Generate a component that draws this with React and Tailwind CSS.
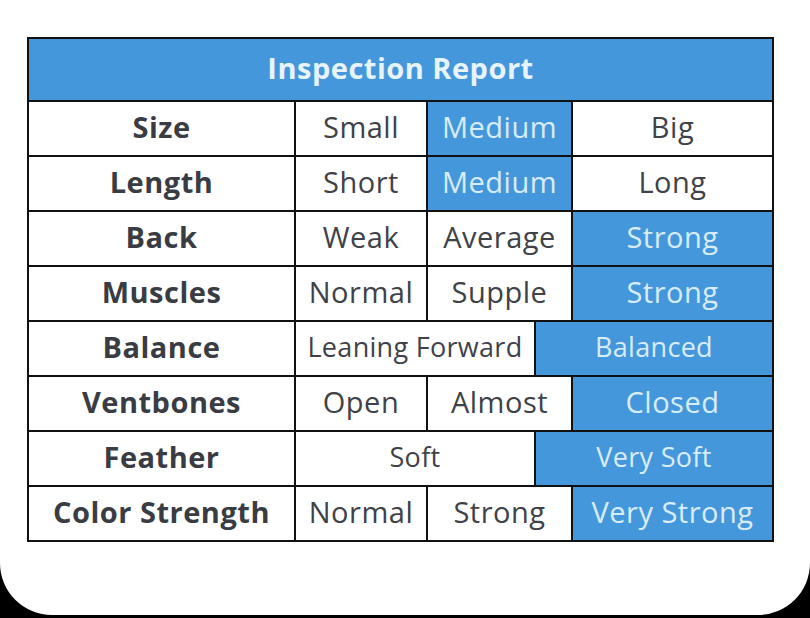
import React from "react";

const rows = [
  { label: "Size", cells: [["Small"], ["Medium", true], ["Big"]] },
  { label: "Length", cells: [["Short"], ["Medium", true], ["Long"]] },
  { label: "Back", cells: [["Weak"], ["Average"], ["Strong", true]] },
  { label: "Muscles", cells: [["Normal"], ["Supple"], ["Strong", true]] },
  { label: "Balance", split: [["Leaning Forward"], ["Balanced", true]] },
  { label: "Ventbones", cells: [["Open"], ["Almost"], ["Closed", true]] },
  { label: "Feather", split: [["Soft"], ["Very Soft", true]] },
  { label: "Color Strength", cells: [["Normal"], ["Strong"], ["Very Strong", true]] },
];

// widths of the value columns (left border included)
const colWidths = ["w-[132px]", "w-[145px]", "w-[201px]"];
const splitWidths = ["w-[240px]", "w-[238px]"];

const Cell = ({ text, hot, width, small }) => (
  <div
    className={`${width} h-full pb-[3px] border-l-2 border-[#111] flex items-center justify-center whitespace-nowrap ${
      hot ? "bg-[#4597dc] text-[#d9ecfa]" : "bg-white text-[#404249]"
    } ${small ? "text-[27px] tracking-[0.3px]" : "text-[29px] tracking-[0.5px]"}`}
  >
    {text}
  </div>
);

const App = () => {
  return (
    <div className="w-[810px] h-[618px] bg-black overflow-hidden font-['Open_Sans',sans-serif]">
      <div className="w-[810px] h-[615px] bg-white rounded-b-[52px] pt-[37px] pl-[27px]">
        <div className="w-[747px] border-2 border-[#111]">
          {/* header */}
          <div className="h-[61px] pb-[3px] bg-[#4597dc] flex items-center justify-center text-[29px] tracking-[0.5px] font-bold text-[#e8f4fc]">
            Inspection Report
          </div>
          {rows.map((row, i) => (
            <div key={i} className="h-[55px] border-t-2 border-[#111] flex">
              <div className="w-[265px] h-full pb-[3px] flex items-center justify-center whitespace-nowrap text-[29px] tracking-[0.5px] font-bold text-[#3a3c44]">
                {row.label}
              </div>
              {row.cells &&
                row.cells.map(([text, hot], j) => (
                  <Cell key={j} text={text} hot={hot} width={colWidths[j]} />
                ))}
              {row.split &&
                row.split.map(([text, hot], j) => (
                  <Cell key={j} text={text} hot={hot} width={splitWidths[j]} small />
                ))}
            </div>
          ))}
        </div>
      </div>
    </div>
  );
};

export default App;
